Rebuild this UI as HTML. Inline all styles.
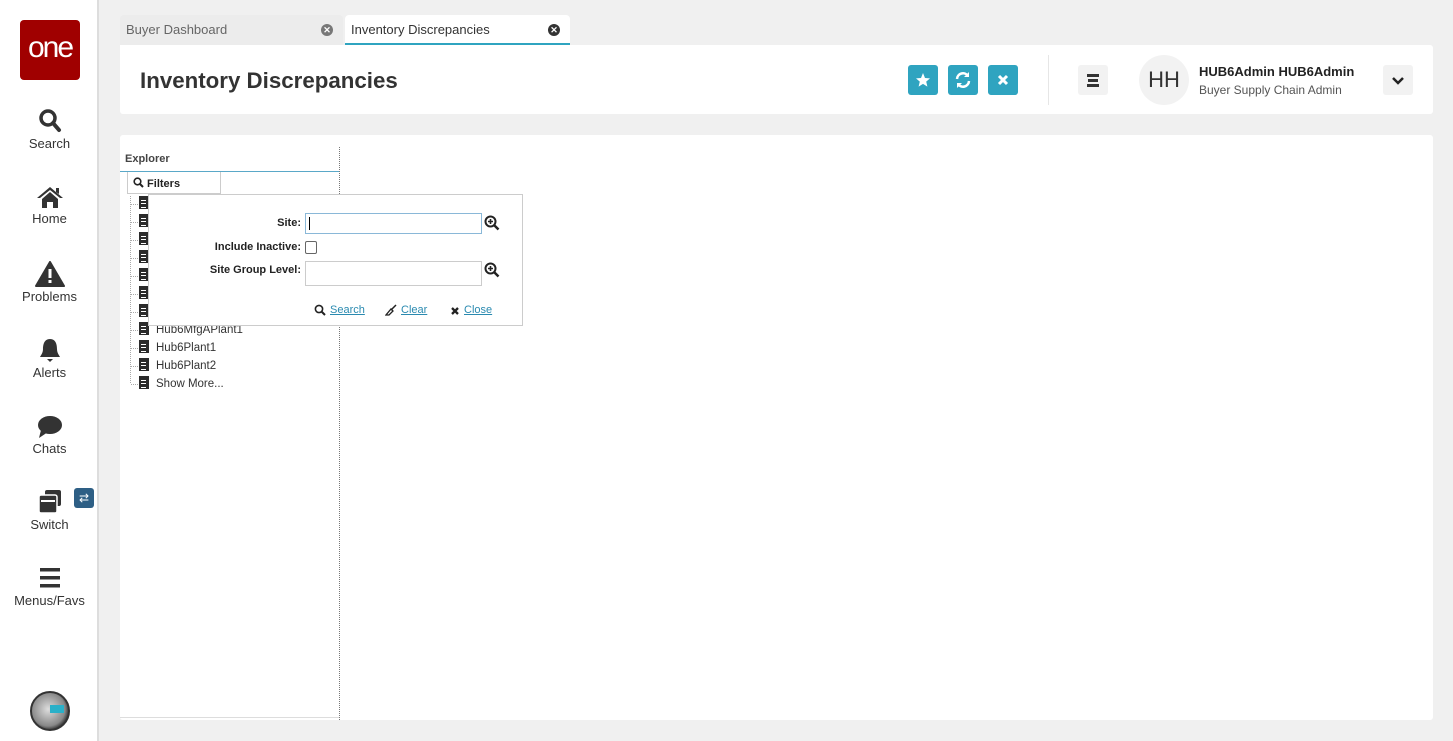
<!DOCTYPE html>
<html><head><style>
*{box-sizing:border-box;margin:0;padding:0}
body{width:1453px;height:741px;background:#f0f0f0;font-family:"Liberation Sans",sans-serif;position:relative;overflow:hidden;color:#333}
.side{position:absolute;left:0;top:0;width:99px;height:741px;background:#fff;border-right:2px solid #ddd}
.logo{position:absolute;left:20px;top:20px;width:60px;height:60px;background:#a00000;border-radius:4px;color:#fff;font-size:30px;text-align:center;line-height:56px;letter-spacing:-2px}
.nav{position:absolute;left:0;width:99px;text-align:center;font-size:13px;color:#333}
.nav svg{display:block;margin:0 auto 2px}
.tab{position:absolute;top:15px;height:30px;font-size:13px;line-height:30px;padding-left:6px;color:#666;background:#ececec;border-radius:4px 4px 0 0}
.tab .x{position:absolute;right:10px;top:9px;width:12px;height:12px;border-radius:50%;background:#555;color:#fff;font-size:9px;line-height:12px;text-align:center;font-weight:bold}
.card{position:absolute;background:#fff;border-radius:3px}
.btn{position:absolute;top:65px;width:30px;height:30px;border-radius:3px;background:#2fa4c0}
.tree{position:absolute;left:139px;font-size:11.5px;color:#333}
.tree:before{content:"";position:absolute;left:-8px;top:8px;width:7px;border-top:1px dotted #aaa}
.doc{display:inline-block;width:10px;height:13px;background:#2b2b2b;vertical-align:-2px;margin-right:7px;position:relative}
.doc:after{content:"";position:absolute;left:2px;top:4px;width:5px;height:6px;border-top:1px solid #fff;border-bottom:1px solid #fff}
.doc:before{content:"";position:absolute;left:2px;top:7px;width:5px;border-top:1px solid #fff}
.lbl{position:absolute;font-size:11px;font-weight:bold;color:#222;text-align:right;width:200px}
.inp{position:absolute;left:305px;width:177px;background:#fff;border:1px solid #ccc}
.lk{position:absolute;top:303px;font-size:11px;color:#2a8ab0;text-decoration:underline}
</style></head><body>
<div class="side">
<div class="logo">one</div>
<div class="nav" style="top:108px"><svg width="24" height="26" viewBox="0 0 24 26"><circle cx="10" cy="10" r="7" fill="none" stroke="#333" stroke-width="3.5"/><line x1="15" y1="15" x2="21" y2="22" stroke="#333" stroke-width="4" stroke-linecap="round"/></svg>Search</div>
<div class="nav" style="top:185px"><svg width="28" height="24" viewBox="0 0 28 24"><path d="M14 2 L1 13 L4 13 L14 5 L24 13 L27 13 Z M20 3 h3 v6 l-3 -2z" fill="#333"/><path d="M6 14 L14 7 L22 14 V23 H17 V17 H11 V23 H6Z" fill="#333"/></svg>Home</div>
<div class="nav" style="top:261px"><svg width="30" height="26" viewBox="0 0 30 26"><path d="M15 1 L29 25 H1 Z" fill="#333" stroke="#333" stroke-linejoin="round" stroke-width="2"/><rect x="13.5" y="8" width="3" height="9" fill="#fff"/><rect x="13.5" y="19" width="3" height="3" fill="#fff"/></svg>Problems</div>
<div class="nav" style="top:337px"><svg width="24" height="26" viewBox="0 0 24 26"><path d="M12 2 C6 2 5 8 5 12 C5 16 3 18 2 20 H22 C21 18 19 16 19 12 C19 8 18 2 12 2Z" fill="#333"/><path d="M9 22 H15 L12 25Z" fill="#333"/></svg>Alerts</div>
<div class="nav" style="top:413px"><svg width="28" height="26" viewBox="0 0 28 26"><ellipse cx="14" cy="12" rx="12" ry="9" fill="#333"/><path d="M5 17 L3 25 L12 19Z" fill="#333"/></svg>Chats</div>
<div class="nav" style="top:489px"><svg width="28" height="26" viewBox="0 0 28 26"><rect x="9" y="1" width="16" height="16" rx="2" fill="#333"/><rect x="3" y="6" width="18" height="18" rx="2" fill="#333" stroke="#fff" stroke-width="1.5"/><rect x="5" y="11" width="14" height="2" fill="#fff"/></svg>Switch</div>
<div style="position:absolute;left:74px;top:488px;width:20px;height:20px;background:#2e5f85;border-radius:3px;color:#fff;font-size:12px;text-align:center;line-height:20px">⇄</div>
<div class="nav" style="top:565px"><svg width="24" height="26" viewBox="0 0 24 26"><rect x="2" y="3" width="20" height="3.5" fill="#333"/><rect x="2" y="11" width="20" height="3.5" fill="#333"/><rect x="2" y="19" width="20" height="3.5" fill="#333"/></svg>Menus/Favs</div>
<div style="position:absolute;left:30px;top:691px;width:40px;height:40px;border-radius:50%;background:radial-gradient(circle at 45% 45%,#ddd,#888 60%,#333 75%);border:2px solid #333"><div style="position:absolute;left:18px;top:12px;width:14px;height:8px;background:#2ab0c8"></div></div>
</div>

<div class="tab" style="left:120px;width:223px">Buyer Dashboard<span class="x" style="background:#777">✕</span></div>
<div class="tab" style="left:345px;width:225px;background:#fff;color:#333;border-bottom:2px solid #2fa4c0">Inventory Discrepancies<span class="x" style="background:#333">✕</span></div>

<div class="card" style="left:120px;top:45px;width:1313px;height:69px;border-radius:0 3px 3px 3px"></div>
<div style="position:absolute;left:140px;top:68px;font-size:22.3px;font-weight:bold;color:#333">Inventory Discrepancies</div>
<div class="btn" style="left:908px"><svg width="30" height="30" viewBox="0 0 30 30"><path d="M15 8 L17 13 L22 13.4 L18.2 16.6 L19.4 21.6 L15 18.9 L10.6 21.6 L11.8 16.6 L8 13.4 L13 13Z" fill="#fff"/></svg></div>
<div class="btn" style="left:948px"><svg width="30" height="30" viewBox="0 0 30 30"><path d="M9 14 A6 6 0 0 1 20 11" fill="none" stroke="#fff" stroke-width="2.5"/><path d="M21 16 A6 6 0 0 1 10 19" fill="none" stroke="#fff" stroke-width="2.5"/><path d="M21 7 V12 H16Z M9 23 V18 H14Z" fill="#fff"/></svg></div>
<div class="btn" style="left:988px"><svg width="30" height="30" viewBox="0 0 30 30"><path d="M11 11 L19 19 M19 11 L11 19" stroke="#fff" stroke-width="3"/></svg></div>
<div style="position:absolute;left:1048px;top:55px;width:1px;height:50px;background:#e6e6e6"></div>
<div style="position:absolute;left:1078px;top:65px;width:30px;height:30px;background:#f2f2f2;border-radius:3px"><div style="position:absolute;left:9px;top:9px;width:12px;height:3px;background:#333"></div><div style="position:absolute;left:10px;top:14px;width:10px;height:3px;background:#333"></div><div style="position:absolute;left:9px;top:19px;width:12px;height:3px;background:#333"></div></div>
<div style="position:absolute;left:1139px;top:55px;width:50px;height:50px;border-radius:50%;background:#f2f2f2;font-size:22px;line-height:50px;text-align:center;color:#333">HH</div>
<div style="position:absolute;left:1199px;top:64px;font-size:13px;font-weight:bold;color:#222">HUB6Admin HUB6Admin</div>
<div style="position:absolute;left:1199px;top:83px;font-size:12px;color:#555">Buyer Supply Chain Admin</div>
<div style="position:absolute;left:1383px;top:65px;width:30px;height:30px;background:#f2f2f2;border-radius:3px"><svg width="30" height="30" viewBox="0 0 30 30"><path d="M10 13 L15 18 L20 13" fill="none" stroke="#222" stroke-width="2.5"/></svg></div>

<div class="card" style="left:120px;top:135px;width:1313px;height:585px"></div>
<div style="position:absolute;left:120px;top:717px;width:219px;height:1px;background:#ddd"></div>
<div style="position:absolute;left:339px;top:147px;width:0;height:573px;border-left:1px dotted #777"></div>
<div style="position:absolute;left:125px;top:153px;font-size:11px;font-weight:bold;color:#444">Explorer</div>
<div style="position:absolute;left:120px;top:171px;width:219px;height:1px;background:#5aa8c8"></div>
<div style="position:absolute;left:127px;top:172px;width:94px;height:22px;border:1px solid #ccc;border-top:none;font-size:11px;font-weight:bold;color:#222;padding:5px 0 0 5px">
<svg width="11" height="11" viewBox="0 0 11 11" style="vertical-align:-1px"><circle cx="4.5" cy="4.5" r="3.3" fill="none" stroke="#222" stroke-width="1.6"/><line x1="7" y1="7" x2="10" y2="10" stroke="#222" stroke-width="2"/></svg> Filters</div>
<div style="position:absolute;left:130px;top:196px;width:0;height:187px;border-left:1px dotted #aaa"></div>
<div class="tree" style="top:196px"><span class="doc"></span></div>
<div class="tree" style="top:214px"><span class="doc"></span></div>
<div class="tree" style="top:232px"><span class="doc"></span></div>
<div class="tree" style="top:250px"><span class="doc"></span></div>
<div class="tree" style="top:268px"><span class="doc"></span></div>
<div class="tree" style="top:286px"><span class="doc"></span></div>
<div class="tree" style="top:304px"><span class="doc"></span></div>
<div class="tree" style="top:322px"><span class="doc"></span>Hub6MfgAPlant1</div>
<div class="tree" style="top:340px"><span class="doc"></span>Hub6Plant1</div>
<div class="tree" style="top:358px"><span class="doc"></span>Hub6Plant2</div>
<div class="tree" style="top:376px"><span class="doc"></span>Show More...</div>

<div style="position:absolute;left:148px;top:194px;width:375px;height:132px;background:#fff;border:1px solid #ccc"></div>
<div class="lbl" style="left:101px;top:217px">Site:</div>
<div class="inp" style="top:213px;height:21px;border-color:#8ab8d8"><div style="position:absolute;left:3px;top:3px;width:1px;height:13px;background:#000"></div></div>
<div class="lbl" style="left:101px;top:241px">Include Inactive:</div>
<div style="position:absolute;left:305px;top:241px;width:12px;height:13px;border:1px solid #666;border-radius:2px;background:#fff"></div>
<div class="lbl" style="left:101px;top:264px">Site Group Level:</div>
<div class="inp" style="top:261px;height:25px"></div>
<svg style="position:absolute;left:484px;top:215px" width="16" height="16" viewBox="0 0 16 16"><circle cx="6.5" cy="6.5" r="5" fill="none" stroke="#222" stroke-width="2"/><path d="M6.5 4v5M4 6.5h5" stroke="#222" stroke-width="1.6"/><line x1="10" y1="10" x2="14.5" y2="14.5" stroke="#222" stroke-width="2.5"/></svg>
<svg style="position:absolute;left:484px;top:262px" width="16" height="16" viewBox="0 0 16 16"><circle cx="6.5" cy="6.5" r="5" fill="none" stroke="#222" stroke-width="2"/><path d="M6.5 4v5M4 6.5h5" stroke="#222" stroke-width="1.6"/><line x1="10" y1="10" x2="14.5" y2="14.5" stroke="#222" stroke-width="2.5"/></svg>
<svg style="position:absolute;left:314px;top:304px" width="12" height="12" viewBox="0 0 12 12"><circle cx="5" cy="5" r="3.6" fill="none" stroke="#222" stroke-width="1.6"/><line x1="7.5" y1="7.5" x2="11" y2="11" stroke="#222" stroke-width="2"/></svg>
<span class="lk" style="left:330px;top:304px">Search</span>
<svg style="position:absolute;left:385px;top:304px" width="12" height="12" viewBox="0 0 12 12"><path d="M11 1 L6 6" stroke="#222" stroke-width="1.5"/><path d="M6 5 L8 7 L4 11 L1 11 Z" fill="none" stroke="#222" stroke-width="1.3"/></svg>
<span class="lk" style="left:401px;top:304px">Clear</span>
<svg style="position:absolute;left:450px;top:306px" width="10" height="10" viewBox="0 0 10 10"><path d="M2 2 L8 8 M8 2 L2 8" stroke="#222" stroke-width="2.3"/></svg>
<span class="lk" style="left:464px;top:304px">Close</span>
</body></html>
